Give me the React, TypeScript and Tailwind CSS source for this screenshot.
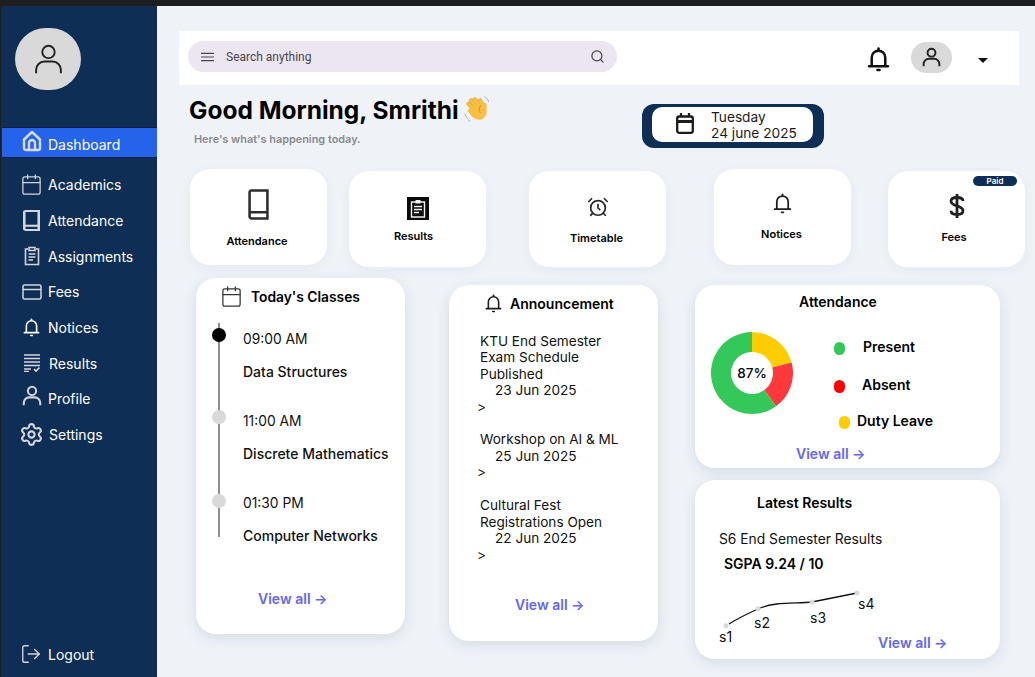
import { AlarmClock, Calendar, LogOut, Search, Settings } from "lucide-react";
import type { ReactNode } from "react";

const Bell = ({ className, w = 2 }: { className: string; w?: number }) => (
  <svg viewBox="0 0 24 24" fill="none" stroke="currentColor" strokeWidth={w} strokeLinecap="round" className={className}>
    <path d="M12 1.500v1.200" />
    <path d="M5.500 18v-8a6.500 6.500 0 0 1 13 0v8" />
    <path d="M3 18.500h18" />
    <path d="M11 22h2" />
  </svg>
);

const Person = ({ className, w = 2 }: { className: string; w?: number }) => (
  <svg viewBox="0 0 24 24" fill="none" stroke="currentColor" strokeWidth={w} className={className}>
    <circle cx="12" cy="6.500" r="4.500" />
    <path d="M3 22v-2.500a6 6 0 0 1 6-6h6a6 6 0 0 1 6 6V22" />
  </svg>
);

const Book = ({ className, w = 2.400 }: { className: string; w?: number }) => (
  <svg viewBox="0 0 20 30" preserveAspectRatio="none" fill="none" stroke="currentColor" strokeWidth={w} className={className}>
    <path d="M3 1.500h15.500v27H3.500a2 2 0 0 1-2-2V3a1.500 1.500 0 0 1 1.500-1.500Z" />
    <path d="M1.500 22.500h17" />
  </svg>
);

const ViewAll = () => <span className="block text-[14px] leading-[17px] font-semibold text-[#6366f1]">View all →</span>;

const navIcon = "text-[#d3d6db]";

function NavRow({ icon, label, wide }: { icon: ReactNode; label: string; wide?: boolean }) {
  return (
    <div className="flex h-[35.700px] items-center text-[14px] font-normal text-white">
      <span className="flex w-[46px] justify-center pr-[2px] pl-[17px]">{icon}</span>
      <span className={wide ? "pl-[2px]" : "pl-[1px]"}>{label}</span>
    </div>
  );
}

function Quick({
  icon,
  label,
  className,
  iconBox,
  labelClass,
  badge,
}: {
  icon: ReactNode;
  label: string;
  className: string;
  iconBox: string;
  labelClass: string;
  badge?: boolean;
}) {
  return (
    <div className={`relative flex h-[96px] w-[137px] shrink-0 flex-col items-center rounded-[20px] bg-white shadow-[0_3px_12px_rgba(30,50,90,0.05)] ${className}`}>
      <div className={`flex items-center justify-center ${iconBox}`}>{icon}</div>
      <div className={`text-[11px] leading-[14px] font-semibold text-black ${labelClass}`}>{label}</div>
      {badge && (
        <span className="absolute top-[5px] right-[8px] flex h-[10px] w-[44px] items-center justify-center rounded-full bg-[#0f2e55] text-[8px] leading-none font-semibold text-white">
          Paid
        </span>
      )}
    </div>
  );
}

const card = "rounded-[20px] bg-white shadow-[0_4px_14px_rgba(30,50,90,0.12)]";

function ClassRow({ time, name, dot, mt }: { time: string; name: string; dot: string; mt: string }) {
  return (
    <div className={`relative pl-[47px] text-[13.800px] leading-[17px] text-[#111] ${mt}`}>
      <span className={`absolute left-[15.500px] size-[14px] rounded-full ${dot}`} />
      <div>{time}</div>
      <div className="mt-[15px] text-[14px] font-medium">{name}</div>
    </div>
  );
}

function Notice({ lines, date, mt }: { lines: string[]; date: string; mt: string }) {
  return (
    <div className={`text-[13.600px] leading-[16.500px] text-[#111] ${mt}`}>
      {lines.map((l) => (
        <div key={l} className="pl-[3px]">
          {l}
        </div>
      ))}
      <div className="pl-[18px]">{date}</div>
      <div>&gt;</div>
    </div>
  );
}

function Donut() {
  const p = (a: number, r: number) => {
    const t = (a * Math.PI) / 180;
    return `${(41 + r * Math.sin(t)).toFixed(2)} ${(41 - r * Math.cos(t)).toFixed(2)}`;
  };
  const seg = (a: number, b: number) =>
    `M${p(a, 41)}A41 41 0 ${b - a > 180 ? 1 : 0} 1 ${p(b, 41)}L${p(b, 21)}A21 21 0 ${b - a > 180 ? 1 : 0} 0 ${p(a, 21)}Z`;
  return (
    <svg viewBox="0 0 82 82" className="size-[82px] shrink-0">
      <path d={seg(0, 75)} fill="#ffcc00" />
      <path d={seg(75, 144)} fill="#ff383c" />
      <path d={seg(144, 360)} fill="#34c759" />
    </svg>
  );
}

const Wave = () => (
  <svg viewBox="0 0 26 26" className="mt-[-3px] ml-[5px] size-[26px]" fill="none" strokeLinecap="round">
    <g stroke="#e29a24" strokeWidth="4.200">
      <path d="M9 12 4.500 8" />
      <path d="M11 9 7 4.500" />
      <path d="M14 7.500 10.800 3.500" />
      <path d="M18 8 16 4.500" />
    </g>
    <path d="M7 10 20 6l2.500 8c.500 4-1 7-4 9-3.500 1.500-7 .500-10-2l-5-6Z" fill="#f8bf45" />
    <g stroke="#f8bf45" strokeWidth="3.300">
      <path d="M9 12 4.500 8" />
      <path d="M11 9 7 4.500" />
      <path d="M14 7.500 10.800 3.500" />
      <path d="M18 8 16 4.500" />
      <path d="M21 14 21 8.500" />
    </g>
    <path d="M17 9.500c-2 2-2.500 4.500-1 7" stroke="#d98e1e" strokeWidth="1" />
    <path d="M1 18c.500 2 1.500 3.500 3 5M4.500 24.500l1.500.8" stroke="#aab1bc" strokeWidth="1" />
    <path d="M20.500 1c1.800.500 3.500 2 4 4.500" stroke="#aab1bc" strokeWidth="1" />
  </svg>
);

export default function App() {
  return (
    <div className="flex h-[677px] w-[1035px] flex-col overflow-hidden bg-[#1e1e1e] [font-family:Inter,sans-serif]">
      <div className="h-[6px] shrink-0" />
      <div className="flex min-h-0 flex-1 pl-px">
        {/* Sidebar */}
        <aside className="flex w-[156px] shrink-0 flex-col bg-[#0f2e55] pb-[13px]">
          <div className="mt-[22px] ml-[14px] flex h-[62px] w-[66px] items-center justify-center rounded-full bg-[#d9d9d9] text-[#222]">
            <Person className="size-[33px]" w={1.400} />
          </div>
          <div className="mt-[37px] ml-px flex h-[31px] items-center border-y border-[#0a1f3c] bg-[#2563eb] text-[14px] font-normal text-white">
            <svg viewBox="0 0 20 22" fill="none" stroke="#d6dae3" strokeWidth="2.400" strokeLinejoin="round" className="mt-[-4px] ml-[20px] h-[22px] w-[20px]">
              <path d="M2 9.500 10 2l8 7.500V18a2 2 0 0 1-2 2H4a2 2 0 0 1-2-2Z" />
              <path d="M7 20v-7a3 3 0 0 1 6 0v7" />
            </svg>
            <span className="ml-[6px] pt-[3px]">Dashboard</span>
          </div>
          <div className="mt-[9px]">
            <NavRow label="Academics" icon={<Calendar className={`size-[23px] ${navIcon}`} strokeWidth={1.300} />} />
            <NavRow label="Attendance" icon={<Book className={`h-[21px] w-[17px] ${navIcon}`} w={3} />} />
            <NavRow
              label="Assignments"
              icon={
                <svg viewBox="0 0 18 20" fill="none" stroke="currentColor" strokeWidth="1.600" className={`h-[20px] w-[18px] ${navIcon}`}>
                  <path d="M5 3H2.500v15.500h13V3H13" />
                  <path d="M6 1.500h6v3H6Z" />
                  <path d="M5.500 8h7M5.500 11h7M5.500 14h4.500" />
                </svg>
              }
            />
            <NavRow
              label="Fees"
              icon={
                <svg viewBox="0 0 20 16" fill="none" stroke="currentColor" strokeWidth="1.500" className={`h-[16px] w-[20px] ${navIcon}`}>
                  <rect x="1" y="1" width="18" height="14" rx="1.500" />
                  <path d="M1 5.500h18" />
                </svg>
              }
            />
            <NavRow label="Notices" icon={<Bell className="size-[19px] text-white" w={2} />} />
            <NavRow
              wide
              label="Results"
              icon={
                <svg viewBox="0 0 16 18" fill="none" stroke="currentColor" strokeWidth="1.700" className={`h-[18px] w-[16px] ${navIcon}`}>
                  <path d="M0 1h16M0 4.500h16M0 8h16M0 11.500h16M0 15h7M0 17.500h5" />
                  <path d="m10 15 2 2 3.500-3.500" />
                </svg>
              }
            />
            <NavRow label="Profile" icon={<Person className={`mt-[-6px] size-[22px] ${navIcon}`} w={2.200} />} />
            <NavRow wide label="Settings" icon={<Settings className={`size-[25px] ${navIcon}`} strokeWidth={2} />} />
          </div>
          <div className="mt-auto flex h-[20px] items-center text-[14px] font-normal text-white">
            <LogOut className={`ml-[19px] size-[22px] ${navIcon}`} strokeWidth={1.500} />
            <span className="ml-[6px]">Logout</span>
          </div>
        </aside>

        {/* Main */}
        <main className="min-w-0 flex-1 bg-[#eff3f8]">
          <header className="mt-[25px] ml-[22px] flex h-[54px] w-[840px] items-start bg-white pl-[9px]">
            <div className="mt-[10px] flex h-[31px] w-[429px] items-center rounded-full bg-[#ece6f0] pr-[12px] pl-[13px] text-[#49454f]">
              <svg viewBox="0 0 14 10" fill="none" stroke="currentColor" strokeWidth="1.300" className="h-[10px] w-[13px]">
                <path d="M0 1h14M0 5h14M0 9h14" />
              </svg>
              <span className="ml-[12px] flex-1 text-[12px] [font-family:Roboto,sans-serif]">Search anything</span>
              <Search className="size-[15px]" strokeWidth={2} />
            </div>
            <Bell className="mt-[16px] ml-[249px] size-[25px] text-[#111]" w={2.400} />
            <div className="mt-[11px] ml-[20px] flex h-[31px] w-[41px] items-center justify-center rounded-full bg-[#d9d9d9] text-[#222]">
              <Person className="size-[21px]" w={2.200} />
            </div>
            <span className="mt-[27px] ml-[26px] size-0 border-x-[5.500px] border-t-[5px] border-x-transparent border-t-[#111]" />
          </header>

          <div className="ml-[32px] flex">
            <div className="w-[453px] shrink-0">
              <h1 className="mt-[11px] flex items-center text-[24.500px] leading-[29px] font-bold text-black">
                Good Morning, Smrithi
                <Wave />
              </h1>
              <p className="mt-[7px] ml-[5px] text-[10.900px] leading-[14px] font-semibold text-[#8a8a8e]">Here's what's happening today.</p>
            </div>
            <div className="mt-[19px] h-[44px] w-[182px] shrink-0 rounded-[12px] bg-[#0f2e55] pt-[3px] pr-[11px] pl-[10px]">
              <div className="flex h-[35px] items-center rounded-[10px] bg-white pl-[24px] text-[13.700px] leading-[16px] text-[#1a1a1a]">
                <svg viewBox="0 0 18 21" fill="none" stroke="#1d1b20" strokeWidth="2.300" className="mt-[-2px] h-[21px] w-[18px]">
                  <rect x="1.200" y="3.500" width="15.600" height="16.300" rx="2" />
                  <path d="M1.200 8.500h15.600" strokeWidth="3" />
                  <path d="M5 0v4M13 0v4" />
                </svg>
                <div className="ml-[17px]">
                  <div>Tuesday</div>
                  <div>24 june 2025</div>
                </div>
              </div>
            </div>
          </div>

          <div className="mt-[21px] ml-[33px] flex h-[98px] items-start">
            <Quick label="Attendance" className="" labelClass="pr-[3px]" iconBox="mt-[20px] mb-[14px]" icon={<Book className="h-[31px] w-[21px] text-[#2c2c2e]" />} />
            <Quick
              label="Results"
              className="mt-[2px] ml-[22px]"
              labelClass="pr-[8px]"
              iconBox="mt-[26px] mb-[9px]"
              icon={
                <svg viewBox="0 0 22 23" className="h-[23px] w-[22px]" fill="none">
                  <rect width="22" height="23" fill="#0a0a0a" />
                  <path d="M4.500 5h13v15h-13Z" stroke="#f2f2f2" strokeWidth="1.400" />
                  <path d="M8.500 3h5v3.500h-5Z" fill="#f2f2f2" />
                  <path d="M7 9.500h8M7 12.500h8M7 15.500h5" stroke="#f2f2f2" strokeWidth="1.400" />
                </svg>
              }
            />
            <Quick
              label="Timetable"
              className="mt-[2px] ml-[43px]"
              labelClass="pr-[2px]"
              iconBox="mt-[25px] mb-[13px]"
              icon={<AlarmClock className="size-[22px] text-[#2c2c2e]" strokeWidth={1.900} />}
            />
            <Quick label="Notices" className="ml-[48px]" labelClass="pr-[2px]" iconBox="mt-[24px] mb-[13px]" icon={<Bell className="size-[21px] text-[#1d1b20]" w={2} />} />
            <Quick
              label="Fees"
              className="mt-[2px] ml-[37px]"
              labelClass="pr-[5px]"
              iconBox="mt-[23px] mb-[12px]"
              badge
              icon={
                <svg viewBox="0 0 16 24" fill="none" stroke="#222" strokeWidth="2.800" className="h-[24px] w-[16px]">
                  <path d="M8 0v24" />
                  <path d="M14 7c0-2.500-2.500-3.500-6-3.500S2 4.800 2 7.300c0 5.500 12 3.500 12 9.400 0 2.500-2.500 3.800-6 3.800s-6-1.300-6-3.800" />
                </svg>
              }
            />
          </div>

          <div className="mt-[11px] ml-[39px] flex items-start">
            {/* Today's classes */}
            <section className={`relative flex h-[356px] w-[209px] shrink-0 flex-col ${card}`}>
              <div className="mt-[7px] ml-[24px] flex items-center">
                <Calendar className="size-[23px] text-[#333]" strokeWidth={1.300} />
                <h2 className="ml-[8px] pt-[1px] text-[13.800px] leading-[17px] font-semibold text-black">Today's Classes</h2>
              </div>
              <div className="relative mt-[23px]">
                <span className="absolute top-[-8px] left-[21.500px] h-[214px] w-[2px] bg-[#8d8d92]" />
                <ClassRow time="09:00 AM" name="Data Structures" dot="top-[-3px] bg-black" mt="" />
                <ClassRow time="11:00 AM" name="Discrete Mathematics" dot="top-[-3px] bg-[#d9d9d9]" mt="mt-[33px]" />
                <ClassRow time="01:30 PM" name="Computer Networks" dot="top-[-1px] bg-[#d9d9d9]" mt="mt-[33px]" />
              </div>
              <div className="mt-[46px] ml-[62px]">
                <ViewAll />
              </div>
            </section>

            {/* Announcement */}
            <section className={`mt-[7px] ml-[44px] flex h-[356px] w-[209px] shrink-0 flex-col ${card}`}>
              <div className="mt-[9px] ml-[35px] flex items-center">
                <Bell className="size-[19px] text-[#1d1b20]" w={2} />
                <h2 className="ml-[7px] text-[14px] leading-[17px] font-semibold text-black">Announcement</h2>
              </div>
              <div className="mt-[19.500px] ml-[28px]">
                <Notice lines={["KTU End Semester", "Exam Schedule", "Published"]} date="23 Jun 2025" mt="" />
                <Notice lines={["Workshop on AI & ML"]} date="25 Jun 2025" mt="mt-[16px]" />
                <Notice lines={["Cultural Fest", "Registrations Open"]} date="22 Jun 2025" mt="mt-[16.500px]" />
              </div>
              <div className="mt-[33px] ml-[66px]">
                <ViewAll />
              </div>
            </section>

            <div className="mt-[7px] ml-[37px] w-[305px] shrink-0">
              {/* Attendance */}
              <section className={`flex h-[183px] flex-col ${card}`}>
                <h2 className="mt-[8px] pr-[19px] text-center text-[14px] leading-[17px] font-semibold text-black">Attendance</h2>
                <div className="mt-[21px] ml-[16px] flex h-[105px] items-start">
                  <div className="relative mt-[1px]">
                    <Donut />
                    <span className="absolute inset-0 flex items-center justify-center text-[13.500px] font-medium text-black">87%</span>
                  </div>
                  <div className="ml-[41px] text-[14px] leading-[17px] font-semibold text-black">
                    <div className="mt-[7px] flex items-center">
                      <span className="mt-[4px] h-[13px] w-[11px] rounded-full bg-[#34c759]" />
                      <span className="ml-[18px]">Present</span>
                    </div>
                    <div className="mt-[21px] flex items-center">
                      <span className="mt-[3px] h-[13px] w-[11px] rounded-full bg-[#ff0000]" />
                      <span className="ml-[17px]">Absent</span>
                    </div>
                    <div className="mt-[19px] flex items-center">
                      <span className="mt-[3px] ml-[5px] h-[13px] w-[11px] rounded-full bg-[#ffcc00]" />
                      <span className="ml-[7px]">Duty Leave</span>
                    </div>
                  </div>
                </div>
                <div className="mt-[9px] ml-[101px]">
                  <ViewAll />
                </div>
              </section>

              {/* Latest results */}
              <section className={`mt-[12px] flex h-[179px] flex-col ${card}`}>
                <h2 className="mt-[14px] ml-[62px] text-[14px] leading-[17px] font-semibold text-black">Latest Results</h2>
                <p className="mt-[20px] ml-[24px] text-[13.800px] leading-[17px] text-[#111]">S6 End Semester Results</p>
                <p className="mt-[7px] ml-[29px] text-[14px] leading-[17px] font-semibold text-black">SGPA 9.24 / 10</p>
                <div className="mt-[14px] flex items-start">
                  <svg viewBox="0 0 170 60" className="ml-[22px] h-[60px] w-[170px] shrink-0" fontFamily="Inter, sans-serif" fontSize="14" fill="#111">
                    <path d="M12 38 C20 33 32 27 41 23 C58 15 80 18 95 16 L140 7" fill="none" stroke="#111" strokeWidth="1.300" />
                    <circle cx="9" cy="39.700" r="2.500" fill="#d9d9d9" />
                    <circle cx="41" cy="22.700" r="2.500" fill="#d9d9d9" />
                    <circle cx="95" cy="16" r="2.500" fill="#d9d9d9" />
                    <circle cx="140" cy="7" r="2.500" fill="#d9d9d9" />
                    <text x="2" y="55.700">s1</text>
                    <text x="37" y="42">s2</text>
                    <text x="93" y="37">s3</text>
                    <text x="141" y="23">s4</text>
                  </svg>
                  <div className="mt-[47.500px] -ml-[9px]">
                    <ViewAll />
                  </div>
                </div>
              </section>
            </div>
          </div>
        </main>
      </div>
    </div>
  );
}
